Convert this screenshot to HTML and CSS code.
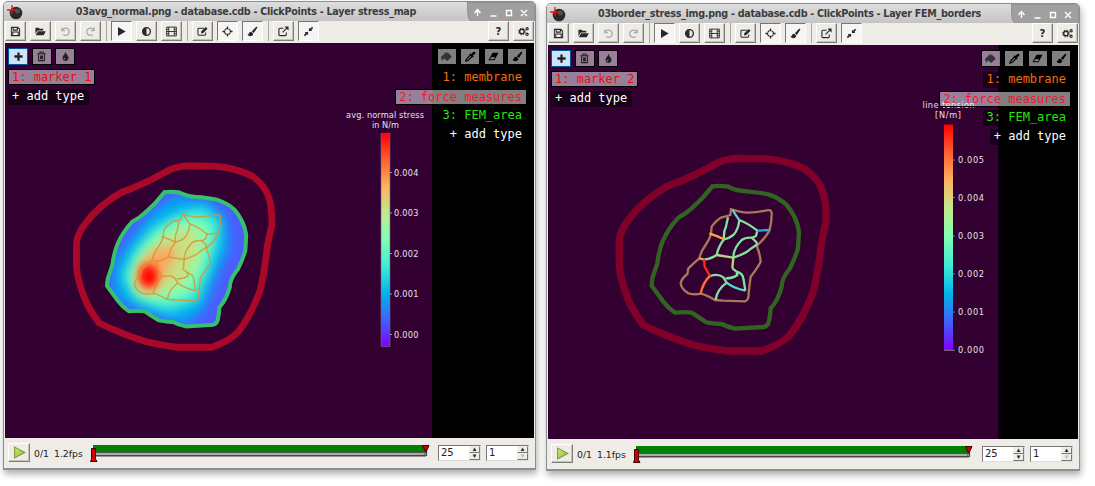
FILE: index.html
```
<!DOCTYPE html>
<html lang="en">
<head>
<meta charset="utf-8">
<title>ClickPoints</title>
<link rel="stylesheet" href="styles.css">
</head>
<body>
<svg class="defs" width="0" height="0">
  <defs>
    <symbol id="save" viewBox="0 0 12 12"><path d="M1.500 1.500h7l2 2v7h-9zM3.500 1.500v3h4.500v-3M3 10.500v-4h6v4" fill="none" stroke="currentColor" stroke-width="1.100"/></symbol>
    <symbol id="open" viewBox="0 0 12 12"><path d="M.5 9V2h3.500l1 1h4v2H3zM.8 10l2.700-4.200h8.200L9.500 10z" fill="currentColor"/></symbol>
    <symbol id="undo" viewBox="0 0 12 12"><path d="M2 1.500v3.500h3.500M2.500 4.500A4 4 0 1 1 3.500 9.300" fill="none" stroke="currentColor" stroke-width="1.400"/></symbol>
    <symbol id="redo" viewBox="0 0 12 12"><path d="M10 1.500v3.500H6.500M9.500 4.500A4 4 0 1 0 8.500 9.300" fill="none" stroke="currentColor" stroke-width="1.400"/></symbol>
    <symbol id="play" viewBox="0 0 12 12"><path d="M2.200 1v10L10.500 6z" fill="currentColor"/></symbol>
    <symbol id="contrast" viewBox="0 0 12 12"><circle cx="6" cy="6" r="4.200" fill="none" stroke="currentColor" stroke-width="1.500"/><path d="M6 2a4 4 0 0 0 0 8z" fill="currentColor"/></symbol>
    <symbol id="film" viewBox="0 0 12 12"><path d="M.7 1.200h10.600v9.600H.7zM3 1.200v9.600M9 1.200v9.600M3 6h6M.7 3.600H3M.7 6H3M.7 8.400H3M9 3.600h2.300M9 6h2.300M9 8.400h2.300" fill="none" stroke="currentColor"/></symbol>
    <symbol id="edit" viewBox="0 0 12 12"><path d="M7.500 2.500H2q-1 0-1 1v5.500q0 1 1 1h6.500q1 0 1-1V7" fill="none" stroke="currentColor" stroke-width="1.100"/><path d="M4.500 8V6L9.500 1l2 2-5 5z" fill="currentColor"/></symbol>
    <symbol id="target" viewBox="0 0 12 12"><circle cx="6" cy="6" r="3.300" fill="none" stroke="currentColor" stroke-width="1.200" stroke-dasharray="3.400 1.780" stroke-dashoffset="-.9"/><path d="M6 .5v3M6 8.500v3M.5 6h3M8.500 6h3" stroke="currentColor" stroke-width="1.400"/></symbol>
    <symbol id="brush" viewBox="0 0 12 12"><path d="M10 .8q1.500-.3 1.200 1.200L7.500 7.500 5.300 5.700zM4.600 6.400l2.200 1.900q-.2 3-3.300 3Q1.500 11.300.5 9q1.500.3 1.700-1 .5-1.700 2.400-1.600z" fill="currentColor"/></symbol>
    <symbol id="export" viewBox="0 0 12 12"><path d="M6 2.500H2q-1 0-1 1v6q0 1 1 1h6q1 0 1-1V7M5 7l5-5" fill="none" stroke="currentColor" stroke-width="1.200"/><path d="M7 .5h4.500V5z" fill="currentColor"/></symbol>
    <symbol id="shrink" viewBox="0 0 12 12"><path d="M6.500 1.800v3.700h3.700zM5.500 10.200V6.500H1.800z" fill="currentColor"/><path d="M7 5l3.500-3.500M5 7l-3.500 3.500" stroke="currentColor" stroke-width="1.700"/></symbol>
    <symbol id="gears" viewBox="0 0 12 12"><g fill="none" stroke="currentColor"><circle cx="4.300" cy="6" r="2.500" stroke-width="1.500"/><circle cx="4.300" cy="6" r="3.700" stroke-dasharray="1.500 1.400"/><circle cx="9.900" cy="3" r="1.200" stroke-width="1.200"/><circle cx="9.900" cy="9" r="1.200" stroke-width="1.200"/></g></symbol>
    <symbol id="plus" viewBox="0 0 12 12"><path d="M6 1.500v9M1.500 6h9" stroke="currentColor" stroke-width="2.500"/></symbol>
    <symbol id="trash" viewBox="0 0 12 12"><path d="M2.800 3.500v7h6.400v-7M1.500 3h9M4.300 2.500V1.200h3.400v1.300M4.800 5v4M6 5v4M7.200 5v4" fill="none" stroke="currentColor" stroke-width="1.100"/></symbol>
    <symbol id="drop" viewBox="0 0 12 12"><path d="M6 .8Q6.500 3 8.500 5.200 9.600 7 9.200 8.400 8.500 11 6 11 3.500 11 2.800 8.400 2.500 7 3.500 5.200 5.500 3 6 .8z" fill="currentColor"/><circle cx="4.800" cy="8.500" r=".8" fill="#998098"/></symbol>
    <symbol id="bucket" viewBox="0 0 12 12"><path d="M4 .8 6 2.600 7.300 1.300l4.500 4.900-5 4.800L3.200 8 1.800 10.500.3 8.500.3 6 4 3z" fill="#333"/></symbol>
    <symbol id="dropper" viewBox="0 0 12 12"><path d="M1 11l.6-2.300L6 4.300 7.700 6 3.300 10.400z" fill="none" stroke="#000" stroke-width="1.300"/><path d="M5 3.500l1-1 1 .8Q9 .3 10.500.8t.8 1.700Q11.200 3.500 8.700 5l.8 1-1 1z" fill="#000"/></symbol>
    <symbol id="eraser" viewBox="0 0 12 12"><path d="M5 2h6.500L7 10H.5z" fill="#000"/><path d="M2.200 9h4.200l1.400-2.300H3.600z" fill="#888"/></symbol>
    <symbol id="logo" viewBox="0 0 16 16"><circle cx="9" cy="9" r="6.300" fill="#292929"/><circle cx="10.500" cy="7" r="2.500" fill="#505050"/><path d="M0 6h9M5 1v9" stroke="#e51616" stroke-width="1.300"/></symbol>
    <linearGradient id="rainbow" x1="0" y1="0" x2="0" y2="1">
      <stop offset="0" stop-color="#f00"/><stop offset=".125" stop-color="#ff6232"/><stop offset=".25" stop-color="#ffb360"/><stop offset=".375" stop-color="#c0eb8d"/><stop offset=".5" stop-color="#80ffb4"/><stop offset=".625" stop-color="#40ecd4"/><stop offset=".75" stop-color="#00b5eb"/><stop offset=".875" stop-color="#4062fa"/><stop offset="1" stop-color="#8000ff"/>
    </linearGradient>
    <linearGradient id="go" x1="0" y1="0" x2="1" y2="1"><stop offset="0" stop-color="#d4eb7c"/><stop offset="1" stop-color="#86b52d"/></linearGradient>
    <filter id="b14" x="-30%" y="-30%" width="160%" height="160%"><feGaussianBlur stdDeviation="16"/></filter>
    <filter id="b10" x="-50%" y="-50%" width="200%" height="200%"><feGaussianBlur stdDeviation="11"/></filter>
    <path id="outer" d="M340 60Q370 42 410 40L490 41Q560 45 615 72Q660 105 670 145Q680 180 678 230L665 290Q655 380 640 440Q610 520 570 570Q540 600 485 618L380 618Q330 612 280 600Q200 575 130 540Q100 500 85 465Q60 400 58 360L58 285Q62 255 85 225Q130 165 200 125Q280 95 340 60Z" fill="none"/>
    <path id="area" d="M337 124Q360 121 385 125Q405 137 440 139Q480 142 505 148Q540 160 560 180Q590 215 597 260L594 310Q585 340 570 370Q545 400 545 425Q535 465 512 490Q510 520 505 535Q500 545 490 546L405 551Q380 545 365 537Q345 537 320 532Q300 520 275 503Q250 500 225 503Q205 490 190 470L155 422L157 400L172 355Q178 310 190 285Q205 250 235 218Q260 205 275 190Q310 160 337 124Z"/>
    <clipPath id="inside"><path transform="translate(-2 -2) scale(1.006)" d="M337 120Q360 117 385 121Q405 133 440 135Q480 138 505 144Q540 156 564 178Q594 215 601 260L598 310Q589 340 574 370Q549 400 549 425Q539 465 516 490Q514 520 509 535Q504 549 490 550L405 555Q380 549 365 541Q345 541 320 536Q300 524 275 507Q250 504 225 507Q205 494 186 470L151 422L153 400L168 355Q174 310 186 285Q201 250 231 215Q260 201 271 187Q306 157 337 120Z"/></clipPath>
    <path id="rim" d="M183 28L181 45Q170 49 155 52Q140 60 125 80L123 102Q120 115 105 138Q92 155 88 175Q70 190 55 205L52 222Q35 235 32 250Q35 268 55 280Q75 285 92 281Q110 285 135 300L160 302L225 304Q237 300 236 280Q238 260 242 230Q262 205 272 185Q270 160 260 138Q290 110 299 90Q306 60 305 38Q303 28 290 31Q240 42 210 35Z"/>
    <g id="cells">
      <path class="c-cyan" d="M188 30Q200 50 208 60M226 272Q190 265 170 248"/>
      <path class="c-green" d="M208 60Q235 70 262 92L258 108L245 114M208 60Q205 90 190 105Q178 115 162 118Q160 95 168 80L174 52M162 118Q145 140 140 165Q120 178 103 178M262 133L258 125L245 113Q225 112 215 120Q190 145 190 173Q230 160 240 148L262 133M187 205L200 215L202 225Q190 235 167 235M200 215Q220 220 221 240L226 272M120 228Q145 220 160 232L170 248Q140 270 137 300"/>
      <path class="c-blue" d="M262 92L299 90"/>
      <path class="c-yellow" d="M140 165L190 173Q188 195 187 205"/>
      <path class="c-orange" d="M118 100Q140 107 162 118M88 175L103 179"/>
      <path class="c-red" d="M102 178L104 200L120 228"/>
      <path class="c-warm" d="M120 228Q100 245 92 281"/>
    </g>
  </defs>
</svg>

<section class="window first">
  <header class="titlebar">
    <svg class="logo"><use href="#logo"/></svg>
    <h1>03avg_normal.png - database.cdb - ClickPoints - Layer stress_map</h1>
    <svg class="controls" viewBox="0 0 68 20"><path class="tab" d="M0 0H68V20H8Q2 20 1 14z"/><path d="M10.500 14V9M7.500 11l3-3.500 3 3.500M23.500 14h6M39.500 8.500h5v5h-5zM54 8l6 6M60 8l-6 6"/></svg>
  </header>
  <nav class="toolbar">
    <button><svg><use href="#save"/></svg></button><button><svg><use href="#open"/></svg></button><button class="off"><svg><use href="#undo"/></svg></button><button class="off"><svg><use href="#redo"/></svg></button><i></i>
    <button class="down"><svg><use href="#play"/></svg></button><button><svg><use href="#contrast"/></svg></button><button><svg><use href="#film"/></svg></button><i></i>
    <button><svg><use href="#edit"/></svg></button><button class="down"><svg><use href="#target"/></svg></button><button class="down"><svg><use href="#brush"/></svg></button><i></i>
    <button><svg><use href="#export"/></svg></button><button class="down"><svg><use href="#shrink"/></svg></button>
    <button class="push help">?</button><button><svg><use href="#gears"/></svg></button>
  </nav>
  <main class="canvas">
    <svg class="scene" viewBox="5 43 529 395">
      <rect x="5" y="43" width="427" height="395" fill="#330032"/>
      <g transform="translate(-508.800 16.500) scale(.945 .943) translate(600 145) scale(.3333)">
        <g clip-path="url(#inside)">
          <g transform="translate(5.600 -10) scale(1.058)">
            <rect x="100" y="80" width="500" height="480" fill="#4a5dfd"/>
            <path d="M340 140L440 150L495 200L510 290L465 390L425 490L370 525L220 475L160 440L160 340L210 270L270 190Z" fill="#00a9f0" filter="url(#b14)"/>
            <path d="M350 190L430 170L482 215L475 290L445 370L415 455L330 490L225 450L185 385L215 310L275 235Z" fill="#37e8d7" filter="url(#b14)"/>
            <path d="M350 215L410 200L455 225L450 290L425 370L390 435L300 460L230 435L208 380L240 305L295 245Z" fill="#86ffb2" filter="url(#b14)"/>
            <path d="M345 245L400 230L422 270L415 325L375 390L320 425L250 430L228 375L265 300Z" fill="#c7e184" filter="url(#b14)"/>
            <path d="M325 290L350 290L340 330L310 380L280 425L245 425L228 385L245 335L290 300Z" fill="#ffa35c" filter="url(#b14)"/>
            <ellipse cx="266" cy="377" rx="30" ry="37" fill="#ff4a20" filter="url(#b10)"/>
            <ellipse cx="266" cy="380" rx="19" ry="23" fill="#f00" filter="url(#b10)"/>
          </g>
        </g>
        <use href="#outer" stroke="#aa0829" stroke-width="21.500"/>
        <use href="#area" fill="none" stroke="#34c36b" stroke-width="12.500"/>
        <g class="flat" transform="translate(210 165)"><use href="#rim"/><use href="#cells"/></g>
      </g>
      <rect x="381" y="133.500" width="9" height="213" fill="url(#rainbow)" stroke="#77618a" stroke-width=".6"/>
      <path d="M390 172.500h2M390 213h2M390 253.500h2M390 294h2M390 334.500h2" stroke="#ccc" stroke-width=".7"/>
      <g class="scale">
        <text x="346" y="118" textLength="78">avg. normal stress</text><text x="372" y="128" textLength="27">in N/m</text>
        <text x="394" y="175.500" textLength="24.500">0.004</text><text x="394" y="216" textLength="24.500">0.003</text><text x="394" y="257" textLength="24.500">0.002</text><text x="394" y="297" textLength="24.500">0.001</text><text x="394" y="338" textLength="24.500">0.000</text>
      </g>
    </svg>
    <div class="hud">
      <div class="left">
        <div class="tools"><b class="active"><svg><use href="#plus"/></svg></b><b><svg><use href="#trash"/></svg></b><b><svg><use href="#drop"/></svg></b></div>
        <span class="tag chosen marker">1: marker 1</span><span class="tag">+ add type</span>
      </div>
      <div class="right">
        <div class="tools"><b><svg><use href="#bucket"/></svg></b><b><svg><use href="#dropper"/></svg></b><b><svg><use href="#eraser"/></svg></b><b><svg><use href="#brush"/></svg></b></div>
        <span class="tag membrane">1: membrane</span><span class="tag chosen force">2: force measures</span><span class="tag fem">3: FEM_area</span><span class="tag">+ add type</span>
      </div>
    </div>
  </main>
  <footer class="player">
    <button><svg viewBox="0 0 12 12"><path d="M1.500 1v10l9.500-5z" fill="url(#go)" stroke="#7a9c3a"/></svg></button>
    <span class="frame">0/1</span><span class="fps">1.2fps</span>
    <svg class="timeline" viewBox="0 0 340 20"><path d="M3 3h334v7H3z" fill="#008000"/><path d="M3 10.500h332v3H3z" fill="#aaa" stroke="#333" stroke-width=".8"/><path d="M3 13.800h333M336.500 10v4" stroke="#444" stroke-width="1.200"/><path d="M1.500 6.500h4V17l1.500 2.500H.5L1.500 17z" fill="#d00000" stroke="#400"/><path d="M332.500 3.500h6.500l-3.200 7z" fill="#d00000" stroke="#400"/></svg>
    <span class="spin">25<i><em>▴</em><em>▾</em></i></span><span class="spin">1<i><em>▴</em><em class="dim">▾</em></i></span>
  </footer>
</section>

<section class="window second">
  <header class="titlebar">
    <svg class="logo"><use href="#logo"/></svg>
    <h1>03border_stress_img.png - database.cdb - ClickPoints - Layer FEM_borders</h1>
    <svg class="controls" viewBox="0 0 68 20"><path class="tab" d="M0 0H68V20H8Q2 20 1 14z"/><path d="M10.500 14V9M7.500 11l3-3.500 3 3.500M23.500 14h6M39.500 8.500h5v5h-5zM54 8l6 6M60 8l-6 6"/></svg>
  </header>
  <nav class="toolbar">
    <button><svg><use href="#save"/></svg></button><button><svg><use href="#open"/></svg></button><button class="off"><svg><use href="#undo"/></svg></button><button class="off"><svg><use href="#redo"/></svg></button><i></i>
    <button class="down"><svg><use href="#play"/></svg></button><button><svg><use href="#contrast"/></svg></button><button><svg><use href="#film"/></svg></button><i></i>
    <button><svg><use href="#edit"/></svg></button><button class="down"><svg><use href="#target"/></svg></button><button class="down"><svg><use href="#brush"/></svg></button><i></i>
    <button><svg><use href="#export"/></svg></button><button class="down"><svg><use href="#shrink"/></svg></button>
    <button class="push help">?</button><button><svg><use href="#gears"/></svg></button>
  </nav>
  <main class="canvas">
    <svg class="scene" viewBox="548 45 530 394">
      <rect x="548" y="45" width="450.500" height="394" fill="#330032"/>
      <g transform="translate(600 145) scale(.3333)">
        <use href="#outer" stroke="#800029" stroke-width="22"/>
        <use href="#area" fill="none" stroke="#316321" stroke-width="13"/>
        <g class="tension" transform="translate(210 165)"><use href="#rim" stroke="#a87858"/><use href="#cells"/></g>
      </g>
      <rect x="944" y="124.500" width="9" height="225.500" fill="url(#rainbow)"/>
      <path d="M953 160h2M953 197.500h2M953 236h2M953 274h2M953 312h2M944 350.300h11" stroke="#aaa" stroke-width=".7"/>
      <g class="scale">
        <text x="922.500" y="108" textLength="52">line tension</text><text x="935" y="118" textLength="26">[N/m]</text>
        <text x="958" y="163" textLength="26">0.005</text><text x="958" y="201" textLength="26">0.004</text><text x="958" y="239" textLength="26">0.003</text><text x="958" y="277" textLength="26">0.002</text><text x="958" y="315" textLength="26">0.001</text><text x="958" y="353" textLength="26">0.000</text>
      </g>
    </svg>
    <div class="hud">
      <div class="left">
        <div class="tools"><b class="active"><svg><use href="#plus"/></svg></b><b><svg><use href="#trash"/></svg></b><b><svg><use href="#drop"/></svg></b></div>
        <span class="tag chosen marker">1: marker 2</span><span class="tag">+ add type</span>
      </div>
      <div class="right">
        <div class="tools"><b><svg><use href="#bucket"/></svg></b><b><svg><use href="#dropper"/></svg></b><b><svg><use href="#eraser"/></svg></b><b><svg><use href="#brush"/></svg></b></div>
        <span class="tag membrane">1: membrane</span><span class="tag chosen force">2: force measures</span><span class="tag fem">3: FEM_area</span><span class="tag">+ add type</span>
      </div>
    </div>
  </main>
  <footer class="player">
    <button><svg viewBox="0 0 12 12"><path d="M1.500 1v10l9.500-5z" fill="url(#go)" stroke="#7a9c3a"/></svg></button>
    <span class="frame">0/1</span><span class="fps">1.1fps</span>
    <svg class="timeline" viewBox="0 0 340 20"><path d="M3 3h334v7H3z" fill="#008000"/><path d="M3 10.500h332v3H3z" fill="#aaa" stroke="#333" stroke-width=".8"/><path d="M3 13.800h333M336.500 10v4" stroke="#444" stroke-width="1.200"/><path d="M1.500 6.500h4V17l1.500 2.500H.5L1.500 17z" fill="#d00000" stroke="#400"/><path d="M332.500 3.500h6.500l-3.200 7z" fill="#d00000" stroke="#400"/></svg>
    <span class="spin">25<i><em>▴</em><em>▾</em></i></span><span class="spin">1<i><em>▴</em><em class="dim">▾</em></i></span>
  </footer>
</section>
</body>
</html>
```

FILE: styles.css
```
* { box-sizing: border-box; }
body { margin: 0; width: 1095px; height: 486px; background: #fff; overflow: hidden; font-family: "DejaVu Sans", sans-serif; color: #222; }
.defs { position: absolute; }
.window { position: absolute; display: flex; flex-direction: column; background: #efebe7; border: solid #8f8f8f; border-width: 1px 1px 2px; border-radius: 5px 5px 0 0; box-shadow: 1px 4px 7px rgba(0,0,0,.32); padding: 0 1px; }
.first { left: 3px; top: 1px; width: 533px; height: 469px; }
.second { left: 546px; top: 3px; width: 534px; height: 468px; }
.titlebar { height: 19px; flex: none; display: flex; align-items: center; margin: 0 -1px; background: linear-gradient(#dedede, #c4c4c4); border-radius: 4px 4px 0 0; overflow: hidden; }
.logo { width: 16px; height: 16px; margin-left: 3px; }
.titlebar h1 { margin: 0 auto; padding-left: 2px; font-size: 9.600px; letter-spacing: -.290px; line-height: 18px; font-weight: bold; color: #3c3c3c; white-space: nowrap; }
.controls { width: 68px; height: 20px; fill: none; stroke: #fff; stroke-width: 1.4; }
.controls .tab { fill: #9f9f9f; stroke: #777; stroke-width: .6; }
.toolbar { height: 22px; flex: none; display: flex; gap: 3.900px; align-items: flex-start; padding-bottom: 2px; }
button { width: 21.200px; height: 20px; flex: none; padding: 0; display: flex; align-items: center; justify-content: center; background: #efebe7; border: 1px solid; border-color: #fff #807d7a #807d7a #fff; box-shadow: inset -1px -1px #c5c1bd; color: #282828; }
.toolbar svg { width: 11px; height: 11px; }
.toolbar i { width: 1px; height: 20px; margin: 0 .400px; background: #aaa6a2; }
.toolbar .off { color: #aaa; }
.toolbar .down { border-color: #777 #fff #fff #777; background: #f7f5f3; box-shadow: none; }
.toolbar .push { margin-left: auto; }
.help { font: bold 10px "DejaVu Sans", sans-serif; }
.canvas { flex: 1; min-height: 0; display: grid; background: #000; }
.first .canvas { flex: 0 0 395px; }
.second .canvas { flex: 0 0 394px; }
.scene, .hud { grid-area: 1 / 1; min-width: 0; width: 100%; }
.scene { height: 100%; display: block; }
.hud { display: flex; justify-content: space-between; padding: 5px 7px 0 3px; z-index: 1; }
.left, .right { display: flex; flex-direction: column; gap: 3px; }
.left { align-items: flex-start; gap: 4px; }
.right { align-items: flex-end; }
.tools { display: flex; gap: 3.500px; margin-bottom: 1px; }
.right .tools { margin-bottom: 2px; }
.left .tools { margin-bottom: 0; }
.tools b { width: 20px; height: 17px; display: flex; align-items: center; justify-content: center; background: #998098; border: 1px solid #000; color: #222; }
.right .tools b { background: rgba(255,255,255,.5); background-clip: padding-box; color: #000; }
.tools b.active { background: #cce4f7; border-color: #0054a0; }
.tools svg { width: 11px; height: 11px; }
.tag { height: 16px; padding: 0 5px 0 4px; font: 12px/15px "DejaVu Sans Mono", monospace; white-space: pre; color: #fff; background: rgba(0,0,0,.5); border: 0 solid #000; }
.chosen { background: rgba(255,255,255,.5); background-clip: padding-box; border-width: 1px; padding: 0 3px; line-height: 14px; }
.right .chosen { padding-right: 4px; }
.marker { color: #f00a12; }
.force { color: #f01830; }
.membrane { color: #f26d0c; }
.fem { color: #28e60c; }
.scale text { font: 8.200px "DejaVu Sans", sans-serif; fill: #e8e0e8; }
.flat { fill: none; stroke: #d99336; stroke-opacity: .85; stroke-width: 4.500; }
.tension { fill: none; stroke-width: 7; }
.tension { --cyan: #55d9c8; --green: #82e0a0; --blue: #28abd9; --yellow: #b9d47c; --orange: #ffa04b; --red: #fa2a14; --warm: #ff7038; }
.c-cyan { stroke: var(--cyan, #d99336); }
.c-green { stroke: var(--green, #d99336); }
.c-blue { stroke: var(--blue, #d99336); }
.c-yellow { stroke: var(--yellow, #d99336); }
.c-orange { stroke: var(--orange, #d99336); }
.c-red { stroke: var(--red, #e8842c); }
.c-warm { stroke: var(--warm, #e8842c); }
.player { flex: 1; display: flex; align-items: flex-start; padding: 5px 5px 0 3px; font-size: 9.300px; }
.player button { width: 22px; height: 19px; }
.player button svg { width: 13px; height: 13px; }
.frame { margin: 5px 0 0 4px; width: 20px; }
.fps { margin-top: 5px; width: 36px; }
.timeline { width: 340px; height: 20px; margin-top: -1px; flex: none; }
.spin { width: 43px; height: 16px; flex: none; margin: 2px 0 0 auto; padding-left: 2px; display: flex; justify-content: space-between; font-size: 10px; line-height: 14px; background: #fff; border: 1px solid; border-color: #777 #ddd #ddd #777; }
.spin + .spin { margin-left: 5px; }
.spin i { width: 11px; display: grid; grid-template-rows: 7px 7px; }
.spin em { border: 1px solid; border-color: #eee #777 #777 #eee; background: #efebe7; font: 7px/5px "DejaVu Sans", sans-serif; text-align: center; overflow: hidden; }
.spin .dim { color: #bbb; }
```
